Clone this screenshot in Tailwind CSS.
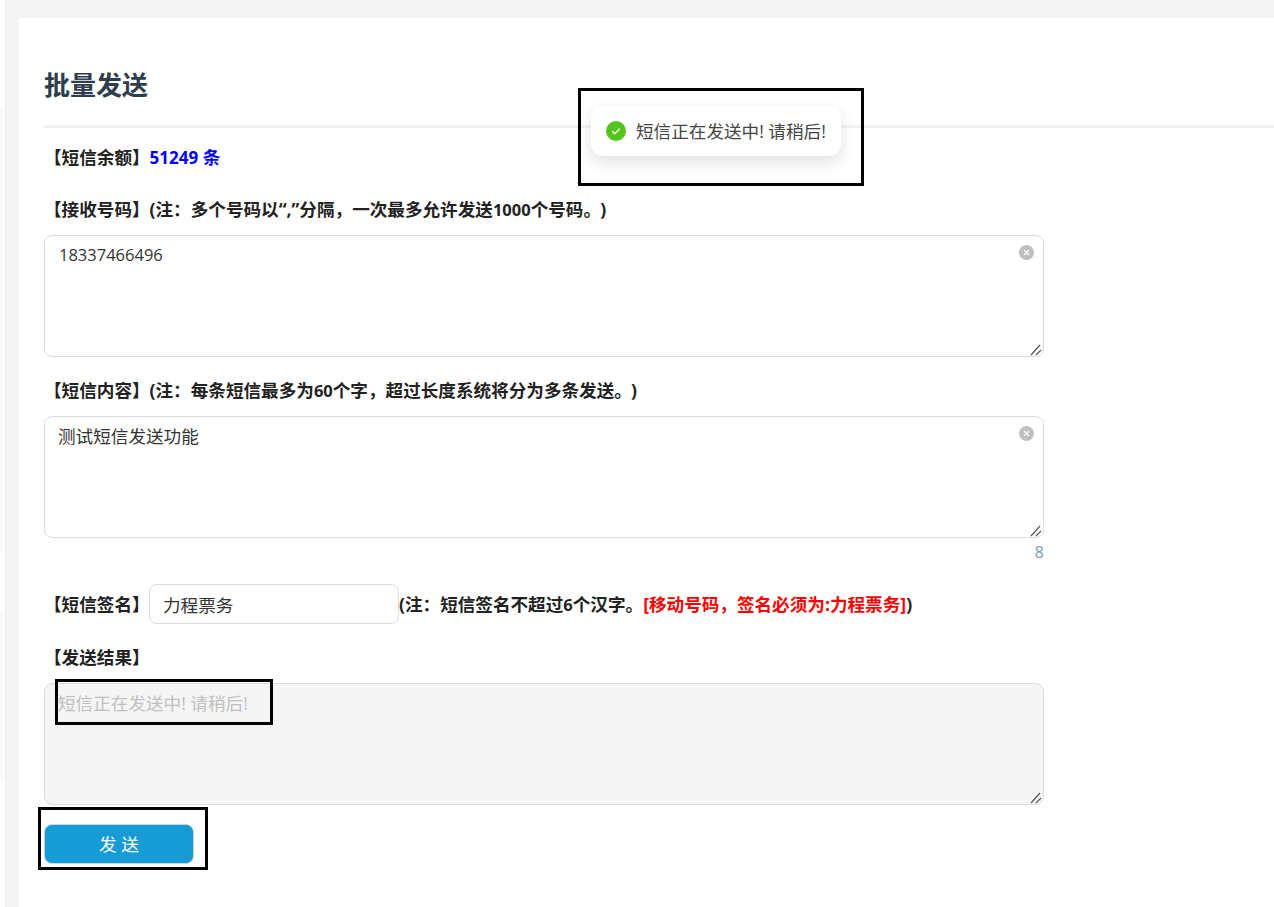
<!DOCTYPE html>
<html lang="en">
<head>
    <meta charset="UTF-8">
    <meta name="viewport" content="width=device-width, initial-scale=1.0">
    <title>批量发送</title>
    <script src="https://cdn.jsdelivr.net/npm/@tailwindcss/browser@4"></script>
</head>
<body class="bg-white font-['Open_Sans','Noto_Sans_CJK_SC',sans-serif] text-[17.6px] text-[#222] overflow-hidden">
<div class="h-[907px] relative overflow-hidden flex">
    <!-- left strip -->
    <div class="w-[5px] shrink-0 flex flex-col">
        <div class="h-[108px] bg-white"></div>
        <div class="h-[444px] bg-[#fafafa]"></div>
        <div class="h-[60px] bg-white"></div>
        <div class="h-[170px] bg-[#fafafa]"></div>
    </div>
    <div class="flex-1 bg-[#f4f4f4] border-l border-[#eeeeee] pt-[18px] pl-[13px] min-w-0">
        <div class="bg-white h-full pl-[25px] relative">
            <h2 class="pt-[49px] h-[107px] text-[26px] leading-[36px] font-bold text-[#2f3e4c]">批量发送</h2>
            <div class="h-[3px] bg-[#f2f2f2]"></div>

            <div class="w-[1000px]">
                <p class="mt-[17px] h-[24px] leading-[24px] font-bold">【短信余额】<span class="text-[#0000ff]"><span class="text-[17px]">51249</span> 条</span></p>

                <p class="mt-[28px] h-[24px] leading-[24px] font-bold">【接收号码】(注：多个号码以“,”分隔，一次最多允许发送<span class="text-[16.5px]">1000</span>个号码。<span class="ml-[8px]">)</span></p>
                <div class="relative mt-[14px]">
                    <textarea class="block w-full h-[122px] resize-none border border-[#dcdcdc] rounded-[8px] pl-[14px] pr-[13px] py-[7px] leading-[24px] text-[16.5px] text-[#333] outline-none">18337466496</textarea>
                    <svg class="absolute right-[10px] top-[10px]" width="15" height="15" viewBox="0 0 15 15"><circle cx="7.5" cy="7.5" r="7.5" fill="#bfbfbf"/><path d="M5 5l5 5M10 5l-5 5" stroke="#fff" stroke-width="1.2"/></svg>
                    <svg class="absolute right-[2px] bottom-[1px]" width="12" height="12" viewBox="0 0 12 12"><path d="M1 11L10 1M6 11l5-5" stroke="#555" stroke-width="1.2" fill="none"/></svg>
                </div>

                <p class="mt-[21px] h-[24px] leading-[24px] font-bold">【短信内容】(注：每条短信最多为<span class="text-[16.5px]">60</span>个字，超过长度系统将分为多条发送。<span class="ml-[8px]">)</span></p>
                <div class="relative mt-[14px]">
                    <textarea class="block w-full h-[122px] resize-none border border-[#dcdcdc] rounded-[8px] px-[13px] py-[7px] leading-[24px] text-[#333] outline-none">测试短信发送功能</textarea>
                    <svg class="absolute right-[10px] top-[10px]" width="15" height="15" viewBox="0 0 15 15"><circle cx="7.5" cy="7.5" r="7.5" fill="#bfbfbf"/><path d="M5 5l5 5M10 5l-5 5" stroke="#fff" stroke-width="1.2"/></svg>
                    <svg class="absolute right-[2px] bottom-[1px]" width="12" height="12" viewBox="0 0 12 12"><path d="M1 11L10 1M6 11l5-5" stroke="#555" stroke-width="1.2" fill="none"/></svg>
                </div>
                <div class="text-right h-[24px] leading-[28px] text-[16.5px] text-[#7c9cbf]">8</div>

                <div class="mt-[22px] flex items-center h-[40px] font-bold">
                    <span class="w-[105px] shrink-0">【短信签名】</span>
                    <input class="w-[250px] h-[40px] border border-[#dcdcdc] rounded-[8px] px-[13px] font-normal text-[#333] outline-none" value="力程票务">
                    <span>(注：短信签名不超过<span class="text-[16.5px]">6</span>个汉字。<span class="text-[#ff0000]">[移动号码，签名必须为:力程票务]</span>)</span>
                </div>

                <p class="mt-[21px] h-[24px] leading-[24px] font-bold">【发送结果】</p>
                <div class="relative mt-[14px]">
                    <textarea disabled class="block w-full h-[122px] resize-none border border-[#dcdcdc] rounded-[8px] bg-[#f5f5f5] px-[13px] py-[7px] leading-[24px] text-[#c0c0c0] outline-none">短信正在发送中! 请稍后!</textarea>
                    <svg class="absolute right-[2px] bottom-[1px]" width="12" height="12" viewBox="0 0 12 12"><path d="M1 11L10 1M6 11l5-5" stroke="#555" stroke-width="1.2" fill="none"/></svg>
                </div>

                <button class="block mt-[19px] w-[150px] h-[40px] rounded-[8px] border border-[#c9d6de] bg-[#169bd5] text-white">发 送</button>
            </div>
        </div>
    </div>

    <!-- toast -->
    <div class="absolute left-[591px] top-[106px] h-[50px] w-[250px] bg-white rounded-[12px] shadow-[0_6px_16px_rgba(0,0,0,0.12)] flex items-center pl-[15px] text-[#444]">
        <svg width="20" height="20" viewBox="0 0 20 20" class="mr-[10px] shrink-0"><circle cx="10" cy="10" r="10" fill="#52c41a"/><path d="M6.3 10.2l2.6 2.5 4.8-5" fill="none" stroke="#fff" stroke-width="1.5"/></svg>
        <span>短信正在发送中! 请稍后!</span>
    </div>

    <!-- black annotation boxes -->
    <div class="absolute left-[578px] top-[88px] w-[286px] h-[98px] border-[3px] border-black"></div>
    <div class="absolute left-[55px] top-[679px] w-[218px] h-[46px] border-[3px] border-black"></div>
    <div class="absolute left-[38px] top-[807px] w-[170px] h-[63px] border-[3px] border-black"></div>
</div>
</body>
</html>
